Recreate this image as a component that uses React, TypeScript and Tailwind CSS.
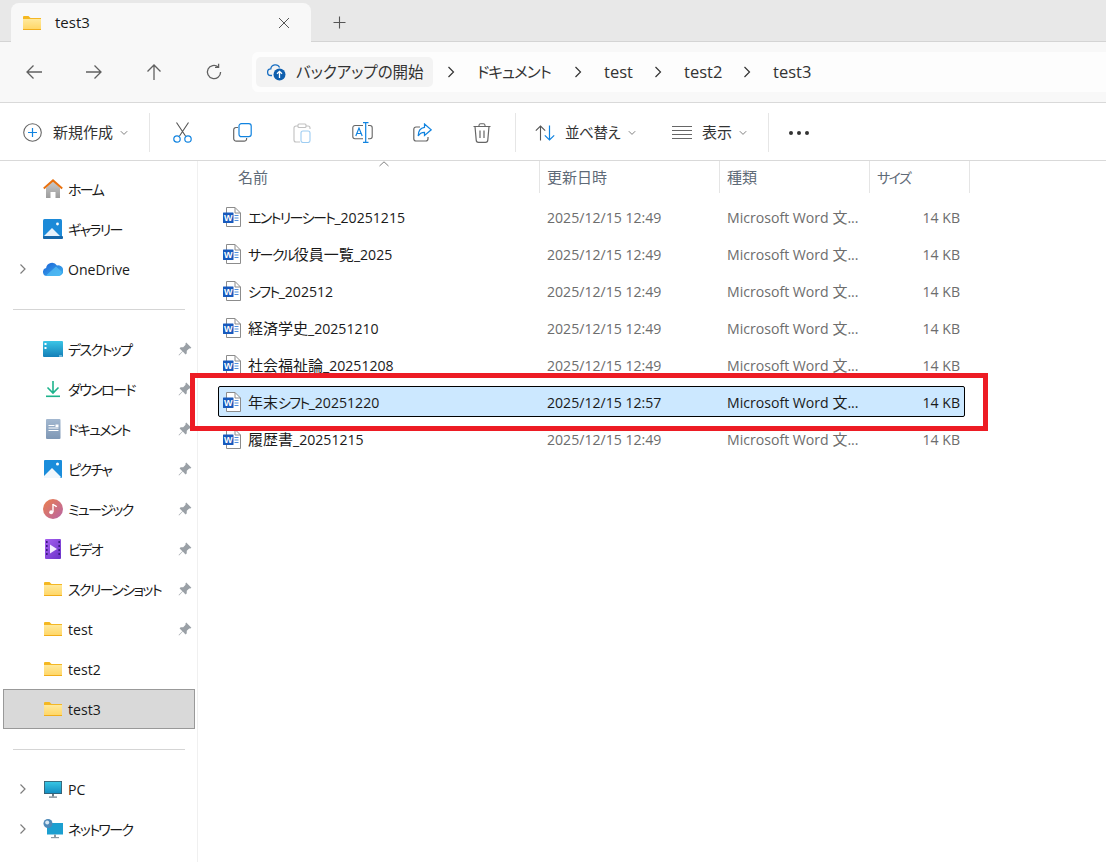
import React from "react";

const T = ({ s }: { s: string }) => (
  <>
    {s
      .split(/([\u30A0-\u30FF]+|[\x20-\x7E]+)/)
      .filter(Boolean)
      .map((p, i) =>
        /[\u30A0-\u30FF]/.test(p) ? (
          <span key={i} className="text-[14px] tracking-[-1.6px]">{p}</span>
        ) : /[\x20-\x7E]/.test(p) ? (
          <span key={i} className="text-[14.1px]">{p}</span>
        ) : (
          <span key={i} className="text-[15px]">{p}</span>
        )
      )}
  </>
);

const Folder = ({ w = 18, h = 14 }: { w?: number; h?: number }) => (
  <svg width={w} height={h} viewBox="0 0 18 14" className="shrink-0">
    <defs>
      <linearGradient id="fo" x1="0" y1="0" x2="0" y2="1"><stop offset="0" stopColor="#ffe99c" /><stop offset="1" stopColor="#ffd768" /></linearGradient>
    </defs>
    <path d="M0 1a1 1 0 0 1 1-1h4.5l2 2H18v2H0z" fill="#f5b81f" />
    <rect x="0" y="2.4" width="18" height="11.6" rx="0.6" fill="#f3b62c" />
    <rect x="0" y="3" width="18" height="10" fill="url(#fo)" />
    <rect x="0" y="13" width="18" height="1" fill="#f1ad1b" />
  </svg>
);

const Word = () => (
  <svg width="18" height="20" viewBox="0 0 18 20" className="shrink-0">
    <path d="M3.5 .5H12L17.5 6V19.5H3.5z" fill="#fff" stroke="#8c8c8c" />
    <path d="M12 .5V6H17.5" fill="none" stroke="#8c8c8c" />
    <rect x="11.5" y="8" width="4" height="1" fill="#4f8fdc" />
    <rect x="11.5" y="10.5" width="4" height="1" fill="#4f8fdc" />
    <rect x="11.5" y="13" width="4" height="1" fill="#4f8fdc" />
    <rect x="0" y="5.5" width="10.5" height="10.5" rx="0.5" fill="#185abd" />
    <text x="5.25" y="14" textAnchor="middle" fontSize="9" fontWeight="700" fill="#fff" fontFamily="Liberation Sans, sans-serif">W</text>
  </svg>
);

const Pin = () => (
  <svg width="14" height="14" viewBox="0 0 14 14" className="shrink-0">
    <path d="M8.2 .6 13.4 5.8 12.3 6.6 11.2 6.4 8.8 8.8 8.7 11.4 7.5 12.4 4.8 9.6 1 13.4 .6 13 4.4 9.2 1.6 6.4 2.6 5.3 5.2 5.2 7.6 2.8 7.4 1.7z" fill="#9aa0a6" />
  </svg>
);

const Chev = () => (
  <svg width="10" height="12" viewBox="0 0 10 12" className="shrink-0">
    <path d="M2.5 1.5 7 6 2.5 10.5" fill="none" stroke="#7d7d7d" strokeWidth="1.2" />
  </svg>
);

const Down = () => (
  <svg width="8" height="6" viewBox="0 0 8 6" className="shrink-0">
    <path d="M.8 1.2 4 4.4 7.2 1.2" fill="none" stroke="#808080" strokeWidth="1" />
  </svg>
);

const Crumb = () => (
  <svg width="8" height="12" viewBox="0 0 8 12" className="shrink-0">
    <path d="M1.5 1 6.5 6 1.5 11" fill="none" stroke="#333" strokeWidth="1.2" />
  </svg>
);

const Nav = ({ d, o = 1 }: { d: string; o?: number }) => (
  <div className="w-[60px] flex items-center justify-center">
    <svg width="18" height="18" viewBox="0 0 18 18" opacity={o}>
      <path d={d} fill="none" stroke="#606060" strokeWidth="1.3" />
    </svg>
  </div>
);

const Home = () => (
  <svg width="20" height="20" viewBox="0 0 20 20">
    <defs>
      <linearGradient id="hb" x1="0" y1="0" x2="0" y2="1"><stop offset="0" stopColor="#c9c9c9" /><stop offset="1" stopColor="#9c9c9c" /></linearGradient>
    </defs>
    <path d="M3 9 10 2.5 17 9V19H12.5V13H7.5V19H3z" fill="url(#hb)" />
    <path d="M.8 9.6 10 1.4 19.2 9.6" fill="none" stroke="#e8710f" strokeWidth="2" />
  </svg>
);
const Gallery = () => (
  <svg width="20" height="20" viewBox="0 0 20 20">
    <rect x="0" y="0" width="19" height="19.5" rx="1.5" fill="#1c8ad8" />
    <rect x="0" y="17" width="20" height="3" rx="1" fill="#1766a8" />
    <path d="M1 17 9 9 17 17z" fill="#e8f2fb" />
    <circle cx="14.5" cy="5" r="1.4" fill="#fff" />
  </svg>
);
const Cloud = () => (
  <svg width="20" height="14" viewBox="0 0 20 14">
    <defs>
      <linearGradient id="cl" x1="0" y1="0" x2="1" y2="1"><stop offset="0" stopColor="#1b62d6" /><stop offset="1" stopColor="#3fb3f0" /></linearGradient>
    </defs>
    <path d="M4 14a4 4 0 0 1-.9-7.9A6 6 0 0 1 14 3.4 4.5 4.5 0 0 1 16 14z" fill="url(#cl)" />
    <path d="M3 13.5 13 4.5 19 10 16.5 14H4z" fill="#56c1f5" opacity=".7" />
  </svg>
);
const Desktop = () => (
  <svg width="20" height="16" viewBox="0 0 20 16">
    <defs>
      <linearGradient id="dk" x1="0" y1="0" x2="0" y2="1"><stop offset="0" stopColor="#3cc5e6" /><stop offset="1" stopColor="#137fb8" /></linearGradient>
    </defs>
    <rect width="20" height="16" rx="1" fill="url(#dk)" />
    <rect x="1.5" y="2" width="2" height="2" fill="#fff" />
    <rect x="1.5" y="6" width="2" height="2" fill="#fff" />
    <rect x="16" y="14.5" width="3" height="1" fill="#bfe9f5" />
  </svg>
);
const Download = () => (
  <svg width="16" height="18" viewBox="0 0 16 18">
    <path d="M8 1V12M2.5 7.5 8 13 13.5 7.5" fill="none" stroke="#1eb38c" strokeWidth="1.6" />
    <rect x="1" y="15.5" width="14" height="1.6" fill="#1eb38c" />
  </svg>
);
const Doc = () => (
  <svg width="15" height="20" viewBox="0 0 15 20">
    <defs>
      <linearGradient id="dc" x1="0" y1="0" x2="0" y2="1"><stop offset="0" stopColor="#a3b8d0" /><stop offset="1" stopColor="#7e97b5" /></linearGradient>
    </defs>
    <rect width="14.5" height="20" rx="1" fill="url(#dc)" />
    <rect x="2.5" y="6" width="6" height="1" fill="#fff" />
    <rect x="2.5" y="8.5" width="10" height="1" fill="#fff" />
    <rect x="2.5" y="11" width="10" height="1" fill="#fff" />
    <rect x="9.5" y="5.5" width="3" height="2.5" fill="#fff" />
  </svg>
);
const Picture = () => (
  <svg width="18" height="18" viewBox="0 0 18 18">
    <rect width="18" height="18" rx="1" fill="#1a8ddb" />
    <path d="M0 16 8 8 16.5 16.5V18H0z" fill="#f1f7fc" />
    <circle cx="13.5" cy="4" r="1.5" fill="#fff" />
  </svg>
);
const Music = () => (
  <svg width="20" height="20" viewBox="0 0 20 20">
    <defs>
      <linearGradient id="mu" x1="0" y1="0" x2="1" y2="1"><stop offset="0" stopColor="#ec7f4a" /><stop offset="1" stopColor="#b765a8" /></linearGradient>
    </defs>
    <circle cx="10" cy="10" r="10" fill="url(#mu)" />
    <path d="M10 5V13" stroke="#fff" strokeWidth="1.4" />
    <path d="M10 5C11 7 13 6.5 13.5 8" stroke="#fff" strokeWidth="1.4" fill="none" />
    <circle cx="8.2" cy="13.2" r="2" fill="#fff" />
  </svg>
);
const Video = () => (
  <svg width="16" height="20" viewBox="0 0 16 20">
    <defs>
      <linearGradient id="vd" x1="0" y1="0" x2="1" y2="1"><stop offset="0" stopColor="#a65ff0" /><stop offset="1" stopColor="#6a33c8" /></linearGradient>
    </defs>
    <rect width="16" height="20" rx="1" fill="url(#vd)" />
    {[2, 6, 10, 14].map((y) => (
      <g key={y}>
        <rect x="1" y={y} width="1.6" height="2" fill="#3a1a80" />
        <rect x="13.4" y={y} width="1.6" height="2" fill="#3a1a80" />
      </g>
    ))}
    <path d="M5 5.5V14.5L12 10z" fill="#f3ecff" />
  </svg>
);
const Pc = () => (
  <svg width="18" height="17" viewBox="0 0 18 17">
    <defs>
      <linearGradient id="pc" x1="0" y1="0" x2="0" y2="1"><stop offset="0" stopColor="#37c6e4" /><stop offset="1" stopColor="#148ec2" /></linearGradient>
    </defs>
    <rect width="18" height="13" fill="#3a5a6a" />
    <rect x=".8" y=".8" width="16.4" height="11.4" fill="url(#pc)" />
    <rect x="8" y="13" width="2" height="2.5" fill="#6a7a85" />
    <rect x="5" y="15.5" width="8" height="1.2" fill="#6a7a85" />
  </svg>
);
const Network = () => (
  <svg width="20" height="20" viewBox="0 0 20 20">
    <rect x="4" y="4" width="16" height="11.5" fill="#1c9fd0" />
    <rect x="11" y="15.5" width="2" height="2.5" fill="#8a99a3" />
    <rect x="8" y="18" width="8" height="1.2" fill="#8a99a3" />
    <circle cx="5" cy="4.5" r="4.5" fill="#4e89b8" />
    <circle cx="4.2" cy="3.6" r="2" fill="#d8e8f4" />
  </svg>
);

const SideRow = ({ icon, label, chev, pin, active }: { icon: React.ReactNode; label: string; chev?: boolean; pin?: boolean; active?: boolean }) => (
  <div className={active ? "h-[40px] mx-[3px] w-[192px] flex items-center bg-[#d9d9d9] border border-[#999999]" : "h-[40px] mx-[3px] w-[192px] flex items-center border border-transparent"}>
    <div className="w-[14px] shrink-0 ml-[12px] flex justify-center">{chev && <Chev />}</div>
    <div className="w-[22px] ml-[12px] shrink-0 flex items-center justify-center">{icon}</div>
    <span className="ml-[4px] flex-1 whitespace-nowrap text-[#1a1a1a]"><T s={label} /></span>
    {pin && <div className="mr-[2px]"><Pin /></div>}
  </div>
);

const Sep = () => (
  <div className="h-[40px] flex items-center pl-[13px]"><div className="w-[172px] h-px bg-[#d5d5d5]" /></div>
);

const files = [
  ["エントリーシート_20251215", "2025/12/15 12:49"],
  ["サークル役員一覧_2025", "2025/12/15 12:49"],
  ["シフト_202512", "2025/12/15 12:49"],
  ["経済学史_20251210", "2025/12/15 12:49"],
  ["社会福祉論_20251208", "2025/12/15 12:49"],
  ["年末シフト_20251220", "2025/12/15 12:57"],
  ["履歴書_20251215", "2025/12/15 12:49"],
];

const ToolIcon = ({ children }: { children: React.ReactNode }) => (
  <div className="w-[60px] flex items-center justify-center shrink-0">{children}</div>
);

const VSep = () => <div className="w-px h-[39px] bg-[#e6e6e6] shrink-0" />;

export default function App() {
  return (
    <div className="relative w-[1106px] h-[862px] overflow-hidden bg-white flex flex-col text-[#1a1a1a] font-['Open_Sans','Noto_Sans_CJK_JP',sans-serif] [font-feature-settings:'palt']">
      {/* tab strip */}
      <div className="h-[42px] shrink-0 bg-[#e8e8e8] border-b border-[#d4d4d4] flex">
        <div className="mt-[3px] ml-[11px] w-[300px] h-[39px] bg-[#f8f8f8] rounded-t-[8px] flex items-center pl-[12px]">
          <Folder />
          <span className="ml-[14px] text-[15px] mb-[1px]">test3</span>
          <svg width="12" height="12" viewBox="0 0 12 12" className="ml-auto mr-[21px]">
            <path d="M1 1 11 11M11 1 1 11" stroke="#555" strokeWidth="1" />
          </svg>
        </div>
        <div className="ml-[22px] mt-[3px] h-[39px] flex items-center">
          <svg width="13" height="13" viewBox="0 0 13 13">
            <path d="M6.5 .5V12.5M.5 6.5H12.5" stroke="#555" strokeWidth="1.1" />
          </svg>
        </div>
      </div>

      {/* navigation */}
      <div className="h-[61px] shrink-0 bg-[#f8f8f8] border-b border-[#d9d9d9] flex items-center pl-[4px]">
        <div className="flex self-stretch">
          <Nav d="M17 9H2M8.5 2.5 2 9 8.5 15.5" />
          <Nav d="M1 9H16M9.5 2.5 16 9 9.5 15.5" />
          <Nav d="M9 17V2M2.5 8.5 9 2 15.5 8.5" />
          <Nav d="M15.6 9A6.6 6.6 0 1 1 13.2 3.9M13.6 .8V4.4H10" />
        </div>
        <div className="ml-[8px] h-[40px] flex-1 bg-[#fdfdfd] rounded-l-[6px] flex items-center pl-[4px]">
          <div className="h-[30px] w-[177px] shrink-0 bg-[#f3f3f3] rounded-[5px] flex items-center pl-[11px]">
            <svg width="19" height="18" viewBox="0 0 19 18" className="shrink-0">
              <path d="M5 12.5H4a3.3 3.3 0 0 1-.2-6.6A4.6 4.6 0 0 1 12.6 4.6" fill="none" stroke="#1a6fc2" strokeWidth="1.3" />
              <circle cx="12.5" cy="11.5" r="6" fill="#0f5fae" />
              <path d="M12.5 15V8.5M10 10.8 12.5 8.3 15 10.8" fill="none" stroke="#fff" strokeWidth="1.3" />
            </svg>
            <span className="ml-[10px] pt-[1px] text-[15.5px] text-[#333] whitespace-nowrap">バックアップの開始</span>
          </div>
          <div className="ml-[14px]"><Crumb /></div>
          <span className="ml-[22px] pt-[1px] text-[15.5px] tracking-[-0.9px] text-[#333] whitespace-nowrap w-[75px]">ドキュメント</span>
          <div className="ml-[22px]"><Crumb /></div>
          <span className="ml-[22px] pt-[1px] text-[16.5px] text-[#333] w-[28px]">test</span>
          <div className="ml-[22px]"><Crumb /></div>
          <span className="ml-[22px] pt-[1px] text-[16.5px] text-[#333] w-[37px]">test2</span>
          <div className="ml-[22px]"><Crumb /></div>
          <span className="ml-[22px] pt-[1px] text-[16.5px] text-[#333]">test3</span>
        </div>
      </div>

      {/* toolbar */}
      <div className="h-[58px] shrink-0 bg-white border-b border-[#d9d9d9] flex items-center pt-[2px]">
        <div className="w-[149px] shrink-0 flex items-center pl-[23px]">
          <svg width="19" height="19" viewBox="0 0 19 19">
            <circle cx="9.5" cy="9.5" r="8.8" fill="none" stroke="#666" strokeWidth="1.1" />
            <path d="M9.5 5V14M5 9.5H14" stroke="#1083e0" strokeWidth="1.2" />
          </svg>
          <span className="ml-[11px] text-[15px] text-[#333] whitespace-nowrap">新規作成</span>
          <div className="ml-[7px]"><Down /></div>
        </div>
        <VSep />
        <div className="w-[2px] shrink-0" />
        <ToolIcon>
          <svg width="19" height="21" viewBox="0 0 19 21">
            <path d="M3.5 .5 12.5 14M15.5 .5 6.5 14" stroke="#555" strokeWidth="1.1" fill="none" />
            <circle cx="4" cy="17" r="3.2" fill="none" stroke="#1083e0" strokeWidth="1.2" />
            <circle cx="15" cy="17" r="3.2" fill="none" stroke="#1083e0" strokeWidth="1.2" />
          </svg>
        </ToolIcon>
        <ToolIcon>
          <svg width="19" height="19" viewBox="0 0 19 19">
            <path d="M5 4.5H3A2.4 2.4 0 0 0 .7 7V15.5A2.6 2.6 0 0 0 3.3 18.2H11A2.4 2.4 0 0 0 13.6 16V15" fill="none" stroke="#666" strokeWidth="1.2" />
            <rect x="6" y=".7" width="12.2" height="13" rx="2.4" fill="none" stroke="#1083e0" strokeWidth="1.2" />
          </svg>
        </ToolIcon>
        <ToolIcon>
          <svg width="18" height="20" viewBox="0 0 18 20" opacity="0.4">
            <path d="M5 3H3A2 2 0 0 0 1 5V17A2 2 0 0 0 3 19H7M13 3H15A2 2 0 0 1 17 5V6" fill="none" stroke="#666" strokeWidth="1.1" />
            <rect x="5" y="1" width="8" height="3.5" rx="1" fill="none" stroke="#666" strokeWidth="1.1" />
            <rect x="8" y="8" width="9" height="11.5" rx="2" fill="none" stroke="#1083e0" strokeWidth="1.1" />
          </svg>
        </ToolIcon>
        <ToolIcon>
          <svg width="21" height="21" viewBox="0 0 21 21">
            <path d="M11 3.5H3A2.2 2.2 0 0 0 .8 5.7V14.6A2.2 2.2 0 0 0 3 16.8H11M16 3.5H18A2.2 2.2 0 0 1 20.2 5.7V14.6A2.2 2.2 0 0 1 18 16.8H16" fill="none" stroke="#666" strokeWidth="1.1" />
            <path d="M11 .7H16.5M13.7 .7V20.3M11 20.3H16.5" fill="none" stroke="#1083e0" strokeWidth="1.2" />
            <path d="M3.8 14 7 6 10.2 14M5 11.5H9" fill="none" stroke="#1083e0" strokeWidth="1.2" />
          </svg>
        </ToolIcon>
        <ToolIcon>
          <svg width="19" height="19" viewBox="0 0 19 19">
            <path d="M7 4H3A2.2 2.2 0 0 0 .8 6.2V15.8A2.2 2.2 0 0 0 3 18H12.8A2.2 2.2 0 0 0 15 15.8V14" fill="none" stroke="#666" strokeWidth="1.2" />
            <path d="M11.5 1 18.2 6.8 11.5 12.5V9.3C8.5 9.3 6.5 10.5 5.2 13 5.2 8 7.5 4.8 11.5 4.3z" fill="none" stroke="#1083e0" strokeWidth="1.2" />
          </svg>
        </ToolIcon>
        <ToolIcon>
          <svg width="18" height="20" viewBox="0 0 18 20">
            <path d="M.5 3.5H17.5M6 3.5V2.2A1.6 1.6 0 0 1 7.6 .7H10.4A1.6 1.6 0 0 1 12 2.2V3.5" fill="none" stroke="#666" strokeWidth="1.1" />
            <path d="M2 3.5 3.2 17A2.3 2.3 0 0 0 5.5 19.3H12.5A2.3 2.3 0 0 0 14.8 17L16 3.5" fill="none" stroke="#666" strokeWidth="1.2" />
            <path d="M7 7.5V15M11 7.5V15" stroke="#666" strokeWidth="1.2" />
          </svg>
        </ToolIcon>
        <div className="w-[3px] shrink-0" />
        <VSep />
        <div className="ml-[19px] flex items-center w-[233px] shrink-0">
          <svg width="20" height="16" viewBox="0 0 20 16" className="shrink-0">
            <path d="M5.5 15.5V1M.8 5.7 5.5 1 10.2 5.7" fill="none" stroke="#555" strokeWidth="1.1" />
            <path d="M14.5 .5V15M9.8 10.3 14.5 15 19.2 10.3" fill="none" stroke="#1083e0" strokeWidth="1.2" />
          </svg>
          <span className="ml-[10px] text-[14.5px] tracking-[-0.4px] text-[#333] whitespace-nowrap w-[56px]">並べ替え</span>
          <div className="ml-[7px]"><Down /></div>
          <svg width="20" height="13" viewBox="0 0 20 13" className="ml-[36px] shrink-0">
            <path d="M0 .5H20M0 4.5H20M0 8.5H20M0 12.5H20" stroke="#666" strokeWidth="1" />
          </svg>
          <span className="ml-[10px] text-[15px] text-[#333] whitespace-nowrap">表示</span>
          <div className="ml-[7px]"><Down /></div>
        </div>
        <VSep />
        <div className="ml-[20px] flex gap-[4px]">
          <div className="w-[4px] h-[4px] rounded-full bg-[#333]" />
          <div className="w-[4px] h-[4px] rounded-full bg-[#333]" />
          <div className="w-[4px] h-[4px] rounded-full bg-[#333]" />
        </div>
      </div>

      {/* body */}
      <div className="flex-1 flex min-h-0">
        <div className="w-[198px] shrink-0 border-r border-[#f0f0f0] pt-[8px]">
          <SideRow icon={<Home />} label="ホーム" />
          <SideRow icon={<Gallery />} label="ギャラリー" />
          <SideRow icon={<Cloud />} label="OneDrive" chev />
          <Sep />
          <SideRow icon={<Desktop />} label="デスクトップ" pin />
          <SideRow icon={<Download />} label="ダウンロード" pin />
          <SideRow icon={<Doc />} label="ドキュメント" pin />
          <SideRow icon={<Picture />} label="ピクチャ" pin />
          <SideRow icon={<Music />} label="ミュージック" pin />
          <SideRow icon={<Video />} label="ビデオ" pin />
          <SideRow icon={<Folder />} label="スクリーンショット" pin />
          <SideRow icon={<Folder />} label="test" pin />
          <SideRow icon={<Folder />} label="test2" />
          <SideRow icon={<Folder />} label="test3" active />
          <Sep />
          <SideRow icon={<Pc />} label="PC" chev />
          <SideRow icon={<Network />} label="ネットワーク" chev />
        </div>

        <div className="flex-1 min-w-0">
          <div className="relative h-[32px] flex text-[#5f6b78]">
            <div className="w-[341px] pl-[40px] flex items-center"><T s="名前" /></div>
            <div className="w-[180px] pl-[7px] flex items-center border-l border-[#e5e5e5]"><T s="更新日時" /></div>
            <div className="w-[150px] pl-[7px] flex items-center border-l border-[#e5e5e5]"><T s="種類" /></div>
            <div className="w-[101px] pl-[7px] flex items-center border-x border-[#e5e5e5]"><T s="サイズ" /></div>
            <svg width="10" height="6" viewBox="0 0 10 6" className="absolute left-[181px] top-0">
              <path d="M.5 5 5 .8 9.5 5" fill="none" stroke="#808080" strokeWidth="1" />
            </svg>
          </div>
          <div className="ml-[20px] w-[747px] pt-[8px] flex flex-col gap-[6px]">
            {files.map(([name, date], i) => (
              <div
                key={name}
                className={
                  i === 5
                    ? "h-[31px] grid grid-cols-[328px_180px_1fr] items-center bg-[#cce8ff] border border-black rounded-[2px] text-[#1a1a1a]"
                    : "h-[31px] grid grid-cols-[328px_180px_1fr] items-center border border-transparent text-[#6d6d6d]"
                }
              >
                <div className="flex items-center pl-[4px]">
                  <Word />
                  <span className="ml-[7px] text-[#1a1a1a] whitespace-nowrap"><T s={name} /></span>
                </div>
                <span className="whitespace-nowrap"><T s={date} /></span>
                <div className="flex justify-between pr-[4px] whitespace-nowrap">
                  <span><T s="Microsoft Word 文..." /></span>
                  <span><T s="14 KB" /></span>
                </div>
              </div>
            ))}
          </div>
        </div>
      </div>

      {/* red annotation */}
      <div className="absolute left-[190px] top-[373px] w-[798px] h-[58px] border-[5px] border-[#ed1c24]" />
    </div>
  );
}
